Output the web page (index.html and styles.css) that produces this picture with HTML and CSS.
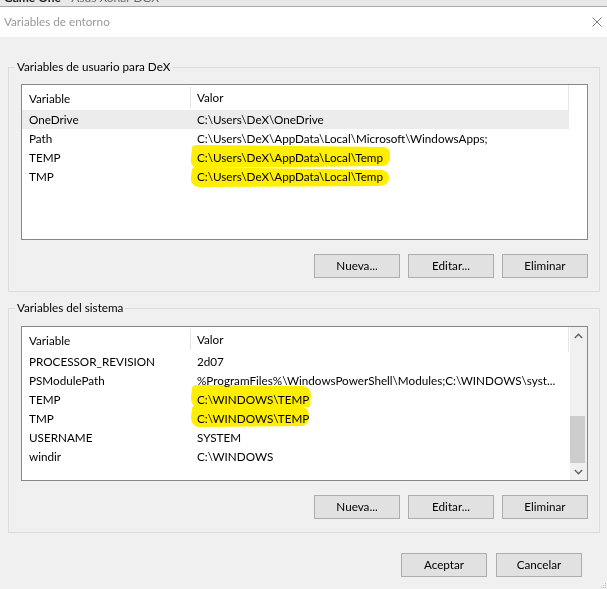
FILE: index.html
```html
<!DOCTYPE html>
<html lang="es">
<head>
<meta charset="utf-8">
<title>Variables de entorno</title>
<link rel="stylesheet" href="styles.css">
</head>
<body>
<div class="topstrip">
  <div class="toptext"><span class="app">Game One</span><span class="sub"> - Asus Xonar DGX</span></div>
</div>
<div class="titlebar">
  <span class="title">Variables de entorno</span>
  <svg class="close" width="10" height="10" viewBox="0 0 10 10"><path d="M0.5 0.5 L9.5 9.5 M9.5 0.5 L0.5 9.5" stroke="#7a7a7a" stroke-width="1" fill="none"/></svg>
</div>
<div class="dialog">
  <fieldset class="group group-user">
    <legend>Variables de usuario para DeX</legend>
    <div class="list list-user">
      <div class="cols">
        <div class="header"><div class="c1">Variable</div><div class="c2">Valor</div></div>
        <div class="row sel"><div class="c1">OneDrive</div><div class="c2">C:\Users\DeX\OneDrive</div></div>
        <div class="row"><div class="c1">Path</div><div class="c2">C:\Users\DeX\AppData\Local\Microsoft\WindowsApps;</div></div>
        <div class="row"><div class="c1">TEMP</div><div class="c2">C:\Users\DeX\AppData\Local\Temp</div></div>
        <div class="row"><div class="c1">TMP</div><div class="c2">C:\Users\DeX\AppData\Local\Temp</div></div>
      </div>
      <svg class="marker" width="565" height="154" viewBox="0 0 565 154">
        <path d="M170 64 Q169 60 176 60 L362 62 Q369 63 368 71 Q368 81 360 81 L174 83 Q168 81 169 73 Z" fill="#ffee00"/>
        <path d="M170 84 Q172 81 178 82 L360 85 Q367 86 367 93 Q367 100 358 101 L176 102 Q168 100 169 92 Z" fill="#ffee00"/>
      </svg>
    </div>
    <div class="btns">
      <button class="btn">Nueva...</button>
      <button class="btn">Editar...</button>
      <button class="btn">Eliminar</button>
    </div>
  </fieldset>

  <fieldset class="group group-sys">
    <legend>Variables del sistema</legend>
    <div class="list list-sys">
      <div class="cols">
        <div class="header"><div class="c1">Variable</div><div class="c2">Valor</div></div>
        <div class="row"><div class="c1">PROCESSOR_REVISION</div><div class="c2">2d07</div></div>
        <div class="row"><div class="c1">PSModulePath</div><div class="c2">%ProgramFiles%\WindowsPowerShell\Modules;C:\WINDOWS\syst...</div></div>
        <div class="row"><div class="c1">TEMP</div><div class="c2">C:\WINDOWS\TEMP</div></div>
        <div class="row"><div class="c1">TMP</div><div class="c2">C:\WINDOWS\TEMP</div></div>
        <div class="row"><div class="c1">USERNAME</div><div class="c2">SYSTEM</div></div>
        <div class="row"><div class="c1">windir</div><div class="c2">C:\WINDOWS</div></div>
      </div>
      <div class="scrollbar">
        <div class="arrow"><svg width="9" height="6" viewBox="0 0 9 6"><path d="M0.8 5 L4.5 1.3 L8.2 5" stroke="#606060" stroke-width="1.4" fill="none"/></svg></div>
        <div class="track"><div class="thumb"></div></div>
        <div class="arrow"><svg width="9" height="6" viewBox="0 0 9 6"><path d="M0.8 1 L4.5 4.7 L8.2 1" stroke="#606060" stroke-width="1.4" fill="none"/></svg></div>
      </div>
      <svg class="marker" width="565" height="153" viewBox="0 0 565 153">
        <path d="M170 61 Q170 58 176 58 L281 59 Q289 60 289 68 L288 80 L175 80 Q169 79 169 70 Z" fill="#ffee00"/>
        <path d="M170 81 Q171 78 177 79 L281 80 Q287 81 287 89 Q287 98 280 99 L176 100 Q169 98 169 90 Z" fill="#ffee00"/>
      </svg>
    </div>
    <div class="btns">
      <button class="btn">Nueva...</button>
      <button class="btn">Editar...</button>
      <button class="btn">Eliminar</button>
    </div>
  </fieldset>

  <div class="footer">
    <button class="btn">Aceptar</button>
    <button class="btn">Cancelar</button>
  </div>
  <svg class="grip" width="7" height="7" viewBox="0 0 7 7"><rect x="5" y="1" width="1" height="1" fill="#bbb"/><rect x="3" y="3" width="1" height="1" fill="#bbb"/><rect x="5" y="3" width="1" height="1" fill="#bbb"/><rect x="1" y="5" width="1" height="1" fill="#bbb"/><rect x="3" y="5" width="1" height="1" fill="#bbb"/><rect x="5" y="5" width="1" height="1" fill="#bbb"/></svg>
</div>
</body>
</html>
```

FILE: styles.css
```css
* { box-sizing: border-box; }

html, body {
  margin: 0;
  padding: 0;
}

body {
  width: 607px;
  height: 589px;
  overflow: hidden;
  background: #f0f0f0;
  font-family: "Segoe UI", "Lato", "Noto Sans", sans-serif;
  font-size: 11.7px;
  color: #000;
}

.topstrip {
  height: 7px;
  background: #e8e8e8;
  border-bottom: 1px solid #a8a8a8;
  overflow: hidden;
}

.toptext {
  margin-top: -10px;
  padding-left: 4px;
  font-size: 12px;
  line-height: 16px;
  white-space: nowrap;
}

.toptext .app { color: #1a1a1a; font-weight: bold; }
.toptext .sub { color: #666; }

.titlebar {
  height: 30px;
  background: #fff;
  display: flex;
  align-items: center;
  justify-content: space-between;
  padding: 0 5px 2px 4px;
}

.title {
  color: #999;
}

.close { display: block; margin-top: 1px; }

.dialog {
  position: relative;
  height: 552px;
  padding-top: 22px;
}

.group {
  margin: 0 7px 0 8px;
  border: 1px solid #dcdcdc;
  padding: 9px 11px 13px 12px;
  min-width: 0;
}

.group legend {
  margin-left: -6px;
  padding: 0 2px 1px;
  line-height: 15px;
  height: 16px;
}

.group-sys {
  margin-top: 8px;
  padding-top: 10px;
}

.list {
  position: relative;
  background: #fff;
  border: 1px solid #828790;
  display: flex;
}

.list-user { height: 156px; }
.list-sys { height: 155px; }

.cols {
  flex: 1;
  min-width: 0;
  overflow: hidden;
}

.list-user .cols { padding-right: 18px; }
.list-sys .cols { padding-right: 1px; }

.header, .row {
  display: flex;
  white-space: nowrap;
}

.header {
  height: 25px;
  align-items: center;
  border-right: 1px solid #e5e5e5;
  padding-bottom: 2px;
}

.header .c1 {
  border-right: 1px solid #e5e5e5;
  align-self: stretch;
  display: flex;
  align-items: center;
  margin-top: 2px;
  margin-bottom: 0;
}

.row {
  height: 19px;
  align-items: center;
  padding-bottom: 2px;
}

.row.sel { background: #ececec; }

.c1 {
  width: 169px;
  padding-left: 7px;
  flex: none;
}

.c2 {
  flex: 1;
  padding-left: 6px;
  overflow: hidden;
}

.scrollbar {
  width: 17px;
  flex: none;
  background: #f0f0f0;
  display: flex;
  flex-direction: column;
}

.arrow {
  height: 17px;
  display: flex;
  align-items: center;
  justify-content: center;
}

.track {
  flex: 1;
  position: relative;
}

.thumb {
  position: absolute;
  left: 0;
  right: 2px;
  bottom: 0;
  height: 47px;
  background: #cdcdcd;
}

.marker {
  position: absolute;
  left: 0;
  top: 0;
  mix-blend-mode: multiply;
  pointer-events: none;
}

.btns {
  display: flex;
  justify-content: flex-end;
  gap: 8px;
  margin-top: 14px;
}

.btn {
  width: 86px;
  height: 24px;
  background: #e1e1e1;
  border: 1px solid #adadad;
  border-radius: 0;
  font-family: inherit;
  font-size: inherit;
  color: #000;
  padding: 0 0 2px;
}

.footer {
  display: flex;
  justify-content: flex-end;
  gap: 9px;
  margin-top: 20px;
  padding-right: 25px;
}

.grip {
  position: absolute;
  right: 0;
  bottom: 0;
}
```
